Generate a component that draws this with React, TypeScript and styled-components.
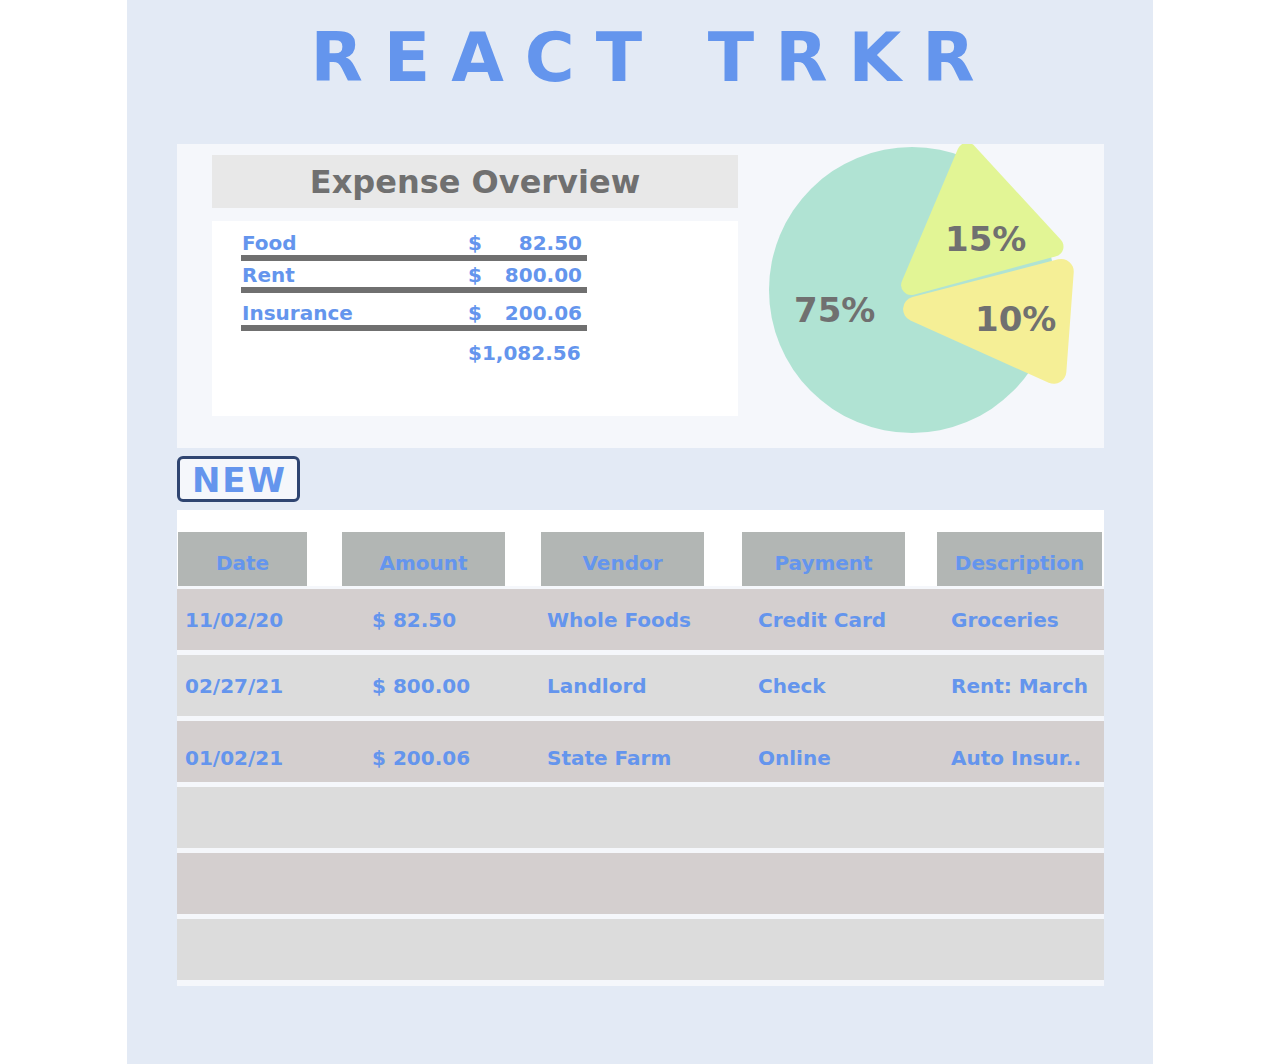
import React from "react";
import styled, { createGlobalStyle } from "styled-components";

const GlobalStyle = createGlobalStyle`
  html, body {
    margin: 0;
    padding: 0;
    background: #ffffff;
  }
  body {
    font-family: "DejaVu Sans", Verdana, sans-serif;
  }
  * { box-sizing: border-box; }
`;

const BLUE = "#6495ed";
const GREY = "#707070";

const Page = styled.div`
  width: 1026px;
  min-height: 100vh;
  margin: 0 auto;
  background: #e3eaf5;
  padding: 0 49px 40px 50px;
`;

const Title = styled.h1`
  margin: 0 0 52px;
  padding: 24px 0 0 25px;
  height: 92px;
  font-size: 68px;
  line-height: 68px;
  font-weight: bold;
  letter-spacing: 21px;
  text-align: center;
  color: ${BLUE};
`;

const Card = styled.section`
  display: flex;
  height: 304px;
  background: #f5f7fb;
  padding-left: 35px;
`;

const LeftCol = styled.div`
  width: 526px;
  padding-top: 11px;
  display: flex;
  flex-direction: column;
`;

const OverviewHeader = styled.h2`
  margin: 0;
  height: 53px;
  padding-top: 1px;
  background: #e8e8e8;
  color: ${GREY};
  font-size: 32px;
  line-height: 52px;
  font-weight: bold;
  text-align: center;
`;

const ListBox = styled.div`
  margin-top: 13px;
  height: 195px;
  background: #ffffff;
  padding: 10px 0 0 29px;
`;

const ListRow = styled.div<{ $gap: number; $bar?: boolean }>`
  display: flex;
  width: 346px;
  margin-top: ${(p) => p.$gap}px;
  border-bottom: ${(p) => (p.$bar ? `6px solid ${GREY}` : "none")};
  font-size: 20px;
  line-height: 24px;
  font-weight: bold;
  color: ${BLUE};
`;

const Label = styled.span`
  width: 227px;
  padding-left: 1px;
`;

const Amount = styled.span`
  width: 114px;
  display: flex;
  justify-content: space-between;
`;

const PieSvg = styled.svg`
  display: block;
  margin-left: 22px;
  flex: none;
`;

const NewButton = styled.button`
  display: block;
  margin-top: 8px;
  width: 123px;
  height: 46px;
  padding: 3px 0 0 2px;
  border: 3px solid #2f4571;
  border-radius: 6px;
  background: #f5f7fb;
  color: ${BLUE};
  font-family: "DejaVu Sans", Verdana, sans-serif;
  font-size: 34px;
  line-height: 37px;
  font-weight: bold;
  letter-spacing: 2px;
  text-align: center;
  cursor: pointer;
`;

const TableWrap = styled.section`
  margin-top: 8px;
  background: #ffffff;
  padding-top: 22px;
`;

const HeaderRow = styled.div`
  display: grid;
  grid-template-columns: 164px 199px 201px 195px 165px;
  padding-left: 1px;
`;

const HeaderCell = styled.div<{ $w: number }>`
  width: ${(p) => p.$w}px;
  height: 54px;
  padding-top: 19px;
  background: #b2b6b4;
  color: ${BLUE};
  font-size: 20px;
  line-height: 24px;
  font-weight: bold;
  text-align: center;
`;

const Body = styled.div`
  display: flex;
  flex-direction: column;
  gap: 5px;
  padding: 3px 0 6px;
  background: #f5f7fb;
`;

const Row = styled.div<{ $alt: boolean; $offset?: number }>`
  display: grid;
  grid-template-columns: 187px 175px 211px 193px 1fr;
  align-items: center;
  height: 61px;
  padding-left: 8px;
  padding-top: ${(p) => p.$offset ?? 0}px;
  background: ${(p) => (p.$alt ? "#dcdcdc" : "#d4cfcf")};
  color: ${BLUE};
  font-size: 20px;
  line-height: 24px;
  font-weight: bold;
  white-space: nowrap;
`;

type Pt = [number, number];

function roundedPath(pts: Pt[], r: number): string {
  const n = pts.length;
  let d = "";
  for (let i = 0; i < n; i++) {
    const prev = pts[(i - 1 + n) % n];
    const cur = pts[i];
    const next = pts[(i + 1) % n];
    const a = [prev[0] - cur[0], prev[1] - cur[1]];
    const b = [next[0] - cur[0], next[1] - cur[1]];
    const la = Math.hypot(a[0], a[1]);
    const lb = Math.hypot(b[0], b[1]);
    const v1 = [a[0] / la, a[1] / la];
    const v2 = [b[0] / lb, b[1] / lb];
    const ang = Math.acos(v1[0] * v2[0] + v1[1] * v2[1]);
    const t = r / Math.tan(ang / 2);
    const p1 = [cur[0] + v1[0] * t, cur[1] + v1[1] * t];
    const p2 = [cur[0] + v2[0] * t, cur[1] + v2[1] * t];
    const cross = v1[0] * v2[1] - v1[1] * v2[0];
    const sweep = cross < 0 ? 1 : 0;
    d += `${i === 0 ? "M" : "L"}${p1[0].toFixed(2)} ${p1[1].toFixed(2)} `;
    d += `A${r} ${r} 0 0 ${sweep} ${p2[0].toFixed(2)} ${p2[1].toFixed(2)} `;
  }
  return d + "Z";
}

const slices = [
  {
    pts: [[964, 134.5], [1072, 252], [894, 300]] as Pt[],
    r: 10,
    fill: "#e2f595",
  },
  {
    pts: [[878, 306], [1075, 255], [1065, 390]] as Pt[],
    r: 12.5,
    fill: "#f5ef96",
  },
];

const pieLabels = [
  { text: "75%", x: 794, y: 322 },
  { text: "15%", x: 945, y: 251 },
  { text: "10%", x: 975, y: 331 },
];

const PieChart = () => (
  <PieSvg width={344} height={304} viewBox="760 144 344 304">
    <circle cx={912} cy={290} r={143} fill="#b0e3d3" />
    {slices.map((s, i) => (
      <path key={i} d={roundedPath(s.pts, s.r)} fill={s.fill} />
    ))}
    {pieLabels.map((l) => (
      <text
        key={l.text}
        x={l.x}
        y={l.y}
        fill={GREY}
        fontSize={34}
        fontWeight="bold"
        fontFamily='"DejaVu Sans", Verdana, sans-serif'
      >
        {l.text}
      </text>
    ))}
  </PieSvg>
);

const expenses = [
  { label: "Food", value: "82.50", gap: 0 },
  { label: "Rent", value: "800.00", gap: 2 },
  { label: "Insurance", value: "200.06", gap: 8 },
];

const headers = [
  { text: "Date", w: 129 },
  { text: "Amount", w: 163 },
  { text: "Vendor", w: 163 },
  { text: "Payment", w: 163 },
  { text: "Description", w: 165 },
];

const rows: { cells: string[]; offset?: number }[] = [
  { cells: ["11/02/20", "$ 82.50", "Whole Foods", "Credit Card", "Groceries"] },
  { cells: ["02/27/21", "$ 800.00", "Landlord", "Check", "Rent: March"] },
  { cells: ["01/02/21", "$ 200.06", "State Farm", "Online", "Auto Insur.."], offset: 13 },
  { cells: [] },
  { cells: [] },
  { cells: [] },
];

export default function App() {
  return (
    <>
      <GlobalStyle />
      <Page>
        <Title>REACT TRKR</Title>
        <Card>
          <LeftCol>
            <OverviewHeader>Expense Overview</OverviewHeader>
            <ListBox>
              {expenses.map((e) => (
                <ListRow key={e.label} $gap={e.gap} $bar>
                  <Label>{e.label}</Label>
                  <Amount>
                    <span>$</span>
                    <span>{e.value}</span>
                  </Amount>
                </ListRow>
              ))}
              <ListRow $gap={10}>
                <Label />
                <Amount>
                  <span>$1,082.56</span>
                </Amount>
              </ListRow>
            </ListBox>
          </LeftCol>
          <PieChart />
        </Card>
        <NewButton>NEW</NewButton>
        <TableWrap>
          <HeaderRow>
            {headers.map((h) => (
              <HeaderCell key={h.text} $w={h.w}>
                {h.text}
              </HeaderCell>
            ))}
          </HeaderRow>
          <Body>
            {rows.map((r, i) => (
              <Row key={i} $alt={i % 2 === 1} $offset={r.offset}>
                {r.cells.map((c, j) => (
                  <span key={j}>{c}</span>
                ))}
              </Row>
            ))}
          </Body>
        </TableWrap>
      </Page>
    </>
  );
}
